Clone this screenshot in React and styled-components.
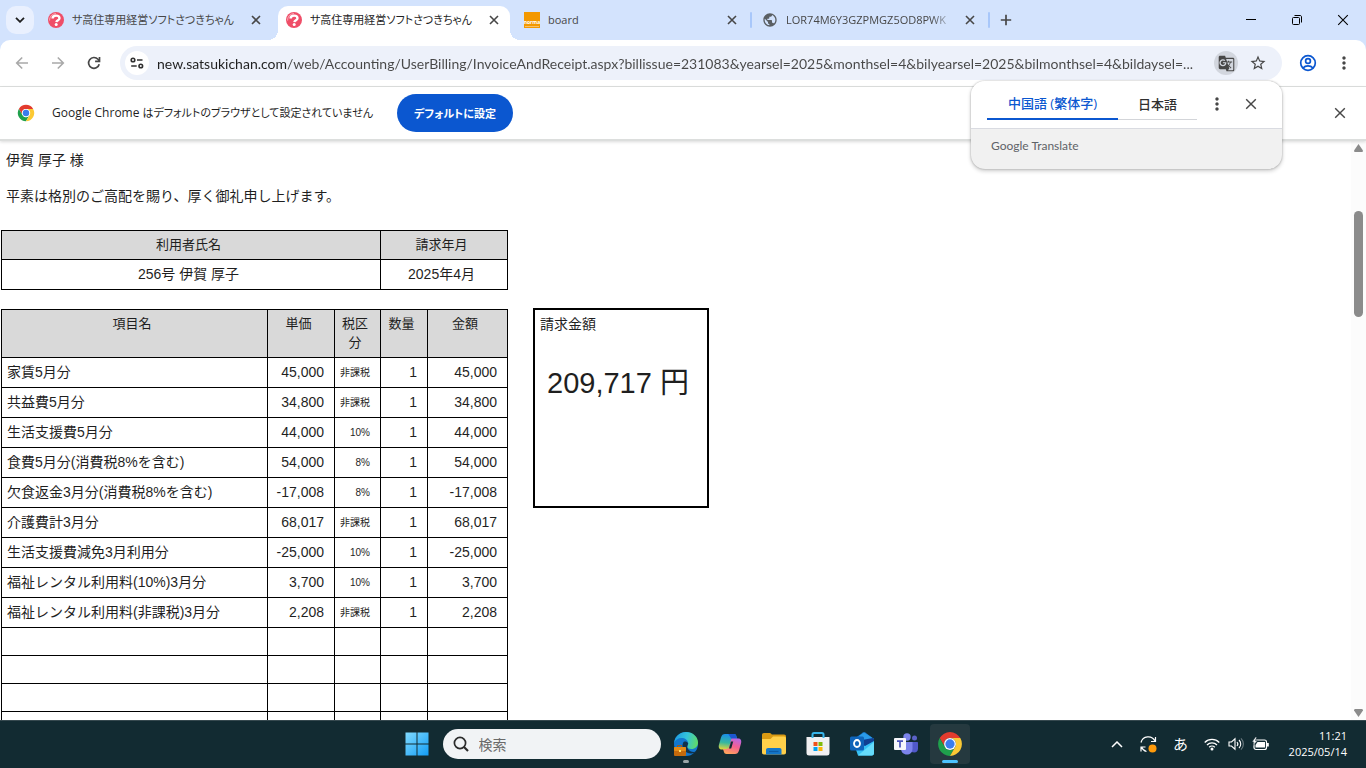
import React from 'react'
import styled, { createGlobalStyle } from 'styled-components'
import { MdGTranslate, MdMoreVert, MdPublic, MdStarBorder } from 'react-icons/md'

const UI_FONT = '"Open Sans", "Noto Sans CJK JP", sans-serif'
const DOC_FONT = '"Liberation Sans", "Noto Sans CJK JP", sans-serif'

const GlobalStyle = createGlobalStyle`
  * {
    box-sizing: border-box;
  }
  body {
    margin: 0;
    overflow: hidden;
    font-family: ${UI_FONT};
    color: #1f1f1f;
  }
  button, input {
    font-family: inherit;
    margin: 0;
    padding: 0;
    border: 0;
    background: none;
    color: inherit;
  }
  svg {
    display: block;
    flex-shrink: 0;
  }
`

const Screen = styled.div`
  display: flex;
  flex-direction: column;
  height: 100vh;
`

/* tab strip */

const TabStrip = styled.header`
  display: flex;
  align-items: center;
  height: 40px;
  flex-shrink: 0;
  background: #d3e3fd;
`

const TabSearch = styled.button`
  display: flex;
  align-items: center;
  justify-content: center;
  width: 28px;
  height: 28px;
  margin: 0 6px;
  border-radius: 10px;
  background: #e9f0fe;
`

const TabBox = styled.div`
  position: relative;
  display: flex;
  align-items: center;
  gap: 8px;
  flex: 0 1 238px;
  min-width: 0;
  height: 40px;
  padding: 0 16px 0 8px;
  color: ${props => props.$active ? '#1f1f1f' : '#474747'};
  z-index: ${props => props.$active ? 1 : 0};

  &::before {
    content: '';
    display: ${props => props.$active ? 'block' : 'none'};
    position: absolute;
    z-index: -1;
    top: 6px;
    right: -4px;
    bottom: 0;
    left: -10px;
    background:
      radial-gradient(circle at 0 0, transparent 10px, #fff 10px) left bottom / 10px 10px no-repeat,
      radial-gradient(circle at 100% 0, transparent 10px, #fff 10px) right bottom / 10px 10px no-repeat;
  }

  &::after {
    content: '';
    display: ${props => props.$divider ? 'block' : 'none'};
    position: absolute;
    top: 12px;
    right: 2px;
    width: 2px;
    height: 16px;
    border-radius: 1px;
    background: #a8c7fa;
  }
`

const TabFill = styled.span`
  position: absolute;
  z-index: -1;
  top: 6px;
  right: 6px;
  bottom: 0;
  left: 0;
  border-radius: 10px 10px 0 0;
  background: #fff;
`

const TabTitle = styled.button`
  flex: 1;
  min-width: 0;
  overflow: hidden;
  white-space: nowrap;
  text-align: left;
  font-size: 11px;
  line-height: 20px;
  font-feature-settings: "palt";
  ${props => props.$fade && 'mask-image: linear-gradient(to right, #000 85%, transparent);'}
`

const PlainButton = styled.button`
  display: flex;
  align-items: center;
  justify-content: center;
  width: ${props => props.$width || 36}px;
  height: ${props => props.$height || 36}px;
  flex-shrink: 0;
  color: ${props => props.$color || '#474747'};
`

const WindowControls = styled.div`
  display: flex;
  margin-left: auto;
`

/* toolbar */

const ToolbarBack = styled.div`
  flex-shrink: 0;
  background: #d3e3fd;
`

const Toolbar = styled.div`
  display: flex;
  align-items: center;
  height: 47px;
  padding: 0 4px;
  border-bottom: 1px solid #dfe1e0;
  border-radius: 10px 10px 0 0;
  background: #fff;
`

const Omnibox = styled.form`
  display: flex;
  align-items: center;
  flex: 1;
  min-width: 0;
  height: 34px;
  margin: 0 8px;
  padding: 0 12px 0 5px;
  gap: 8px;
  border-radius: 17px;
  background: #edf1fa;
`

const RoundButton = styled.button`
  display: flex;
  align-items: center;
  justify-content: center;
  width: 24px;
  height: 24px;
  flex-shrink: 0;
  border-radius: 50%;
  background: ${props => props.$fill || 'transparent'};
  color: #474747;
`

const UrlInput = styled.input`
  flex: 1;
  min-width: 0;
  height: 24px;
  font-family: Lato, sans-serif;
  font-size: 14px;
  outline: 0;
  color: transparent;
  background: linear-gradient(to right, #1f1f1f 130px, #474747 130px);
  background-clip: text;
  -webkit-background-clip: text;
`

/* default browser prompt */

const InfoBar = styled.div`
  display: flex;
  align-items: center;
  height: 54px;
  flex-shrink: 0;
  padding: 0 8px 0 17px;
  border-bottom: 2px solid #dcdedd;
  box-shadow: 0 1px 3px rgba(0, 0, 0, 0.15);
  position: relative;
  background: #fff;
`

const InfoText = styled.span`
  margin: 0 24px 0 17px;
  font-size: 12px;
  line-height: 20px;
`

const Kanji = styled.span`
  font-size: 11px;
  font-feature-settings: "palt";
`

const DefaultButton = styled.button`
  height: 38px;
  padding: 0 17px;
  border-radius: 19px;
  background: #0b57d0;
  color: #fff;
  font-size: 11px;
  font-weight: 700;
  font-feature-settings: "palt";
`

const Spacer = styled.div`
  flex: 1;
`

/* translate bubble */

const Bubble = styled.section`
  position: absolute;
  z-index: 5;
  top: 81px;
  right: 84px;
  width: 311px;
  border-radius: 14px;
  overflow: hidden;
  background: #f1f1f1;
  box-shadow: 0 0 2px rgba(0, 0, 0, 0.3), 0 2px 4px rgba(0, 0, 0, 0.2);
`

const BubbleHead = styled.div`
  display: flex;
  align-items: center;
  height: 48px;
  padding: 0 14px 2px 16px;
  border-bottom: 1px solid #d9dbe1;
  background: #fff;
`

const LanguageTab = styled.button`
  height: 32px;
  width: ${props => props.$selected ? 131 : 79}px;
  font-size: 13px;
  font-weight: 500;
  color: ${props => props.$selected ? '#0b57d0' : '#303030'};
  border-bottom: ${props => props.$selected ? '2px solid #0b57d0' : '1px solid #d3d5d9'};
`

const BubbleFoot = styled.div`
  height: 40px;
  padding: 7px 20px;
  font-family: Lato, sans-serif;
  font-size: 12px;
  line-height: 20px;
  color: #5f6368;
`

/* page */

const Viewport = styled.div`
  display: flex;
  flex: 1;
  min-height: 0;
`

const Page = styled.main`
  flex: 1;
  min-width: 0;
  overflow: hidden;
  padding: 9px 1px 0;
  font-family: ${DOC_FONT};
  font-size: 14px;
`

const Line = styled.p`
  margin: 0 5px 16px;
  line-height: 20px;
`

const Invoice = styled.div`
  display: flex;
  align-items: flex-start;
  gap: 25px;
`

const Table = styled.table`
  width: 507px;
  table-layout: fixed;
  border-collapse: collapse;
  margin: ${props => props.$top}px 0 0;
`

const Col = styled.col`
  width: ${props => props.$width}px;
`

const HeadCell = styled.th`
  height: ${props => props.$tall ? 48 : 29}px;
  padding: 4px 10px 4px 5px;
  border: 1px solid #000;
  background: #d9d9d9;
  font-size: 13px;
  font-weight: 400;
  line-height: 19px;
  vertical-align: top;
`

const Cell = styled.td`
  height: ${props => props.$blank ? 28 : 30}px;
  padding: 0 10px ${props => props.$small ? 0 : 2}px 5px;
  border: 1px solid #000;
  font-size: ${props => props.$small ? 10 : 14}px;
  line-height: 20px;
  text-align: ${props => props.$align || 'left'};
  white-space: nowrap;
`

const TotalBox = styled.section`
  width: 176px;
  height: 200px;
  margin-top: 18px;
  padding: 4px 5px;
  border: 2px solid #000;
  line-height: 20px;
`

const Total = styled.div`
  margin-top: 29px;
  padding-left: 7px;
  font-size: 29px;
  line-height: 40px;
  white-space: nowrap;
`

const ScrollTrack = styled.div`
  display: flex;
  flex-direction: column;
  align-items: center;
  width: 15px;
  padding: 3px 0;
  background: #fcfcfc;
  color: #8b8b8b;
`

const ScrollThumb = styled.div`
  width: 9px;
  height: 106px;
  margin: 59px 0 auto;
  border-radius: 5px;
  background: #8b8b8b;
`

/* taskbar */

const Taskbar = styled.footer`
  display: grid;
  grid-template-columns: 1fr auto 1fr;
  align-items: center;
  height: 48px;
  flex-shrink: 0;
  box-shadow: inset 0 1px #36494f;
  background: #122b32;
  color: #fff;
`

const TaskGroup = styled.div`
  display: flex;
  align-items: center;
  grid-column: 2;
`

const SearchBox = styled.label`
  display: flex;
  align-items: center;
  gap: 10px;
  width: 218px;
  height: 30px;
  margin: 0 3px 0 4px;
  padding: 0 10px;
  border-radius: 15px;
  background: #f1f3f5;
`

const SearchInput = styled.input`
  width: 150px;
  font-size: 14px;
  outline: 0;
  &::placeholder {
    color: #6a6a6a;
    opacity: 1;
  }
`

const AppButton = styled.button`
  position: relative;
  display: flex;
  align-items: center;
  justify-content: center;
  width: 40px;
  height: 40px;
  margin: 0 2px;
  border-radius: 4px;
  background: ${props => props.$active ? '#25393f' : 'transparent'};

  &::after {
    content: '';
    display: ${props => props.$mark ? 'block' : 'none'};
    position: absolute;
    bottom: 1px;
    width: ${props => props.$active ? 16 : 6}px;
    height: 3px;
    border-radius: 2px;
    background: ${props => props.$mark};
  }
`

const Tray = styled.div`
  display: flex;
  align-items: center;
  justify-content: flex-end;
  padding-right: 19px;
`

const Kana = styled.span`
  font-size: 15px;
  line-height: 20px;
`

const Status = styled.button`
  display: flex;
  align-items: center;
  gap: 8px;
  margin: 0 20px 0 7px;
`

const Clock = styled.button`
  font-size: 11px;
  line-height: 16px;
  text-align: right;
`

function Cross({ size = 10, weight = 1.6 }) {
  return (
    <svg width={size} height={size} viewBox="0 0 10 10" stroke="currentColor" strokeWidth={weight} fill="none">
      <path d="M1 1l8 8M9 1l-8 8" />
    </svg>
  )
}

function SatsukiIcon() {
  return (
    <svg width="16" height="16" viewBox="0 0 16 16">
      <circle cx="8" cy="8" r="8" fill="#ef4e68" />
      <path d="M1.6 8.6A6.4 6.4 0 0 1 8 1.6" stroke="#f9b3be" strokeWidth="0.9" fill="none" />
      <path d="M4.6 6.4C4.6 4.4 6.2 3.6 8 3.6s3.5.9 3.5 2.6c0 2.1-2.9 1.9-3.1 4" stroke="#fff" strokeWidth="2.4" fill="none" />
      <circle cx="8.2" cy="12.6" r="1.5" fill="#fff" />
    </svg>
  )
}

function BoardIcon() {
  return (
    <svg width="16" height="16" viewBox="0 0 16 16">
      <rect width="16" height="16" fill="#f39800" />
      <text x="8" y="11.5" fontSize="5" fontWeight="700" textAnchor="middle" fill="#fff">norma</text>
      <path d="M1 14.5h14" stroke="#f9cb80" strokeWidth="0.8" />
    </svg>
  )
}

function ChromeIcon({ size }) {
  return (
    <svg width={size} height={size} viewBox="0 0 48 48">
      <path d="M43.05 13A22 22 0 0 0 4.95 13L14.47 29.5A11 11 0 0 1 24 13z" fill="#e33b2e" />
      <path d="M4.95 13A22 22 0 0 0 24 46L33.53 29.5A11 11 0 0 1 14.47 29.5z" fill="#1fa04c" />
      <path d="M43.05 13A22 22 0 0 1 24 46L33.53 29.5A11 11 0 0 0 24 13z" fill="#fcc934" />
      <circle cx="24" cy="24" r="11" fill="#fff" />
      <circle cx="24" cy="24" r="8.6" fill="#3b7ded" />
    </svg>
  )
}

function ArrowIcon({ forward }) {
  return (
    <svg width="14" height="14" viewBox="0 0 14 14" stroke="#a9a9a9" strokeWidth="1.6" fill="none">
      <path d={forward ? 'M1 7h11M6.8 1.5L12.3 7l-5.5 5.5' : 'M13 7H2M7.2 1.5L1.7 7l5.5 5.5'} />
    </svg>
  )
}

function ReloadIcon() {
  return (
    <svg width="14" height="14" viewBox="0 0 14 14" stroke="#474747" strokeWidth="1.7" fill="none">
      <path d="M12.2 8.2A5.4 5.4 0 1 1 11 3.3L12.4 4.8" />
      <path d="M12.5 1v4.4H8.1" />
    </svg>
  )
}

function TuneIcon() {
  return (
    <svg width="14" height="12" viewBox="0 0 14 12" stroke="#303030" strokeWidth="1.6" fill="none">
      <circle cx="3" cy="3" r="1.8" />
      <path d="M7 3h5.5M1.2 9h5.5" />
      <circle cx="10.8" cy="9" r="1.8" />
    </svg>
  )
}

function ProfileIcon() {
  return (
    <svg width="18" height="18" viewBox="0 0 18 18" stroke="#0b57d0" strokeWidth="1.7" fill="none">
      <circle cx="9" cy="9" r="7.3" />
      <circle cx="9" cy="7" r="2.4" />
      <path d="M4 14c1.4-1.6 3-2.2 5-2.2s3.6.6 5 2.2" />
    </svg>
  )
}

function StartIcon() {
  return (
    <svg width="24" height="24" viewBox="0 0 24 24">
      <defs>
        <linearGradient id="start" x1="0" y1="0" x2="24" y2="24" gradientUnits="userSpaceOnUse">
          <stop offset="0" stopColor="#84dcff" />
          <stop offset="1" stopColor="#109bf5" />
        </linearGradient>
      </defs>
      <path d="M.5.5h11v11h-11zM12.5.5h11v11h-11zM.5 12.5h11v11h-11zM12.5 12.5h11v11h-11z" fill="url(#start)" />
    </svg>
  )
}

function EdgeIcon() {
  return (
    <svg width="26" height="26" viewBox="0 0 26 26">
      <defs>
        <linearGradient id="edgeTop" x1="1" y1="6" x2="25" y2="12" gradientUnits="userSpaceOnUse">
          <stop offset="0" stopColor="#1d9be0" />
          <stop offset="0.5" stopColor="#33c3dc" />
          <stop offset="1" stopColor="#63dd62" />
        </linearGradient>
      </defs>
      <circle cx="13" cy="13" r="12" fill="#1277cf" />
      <path d="M1 12C2 5 7 1 13 1c7 0 12 5 12 10.5 0 4-3 6.5-6.5 6.5-3 0-4.5-1.2-4.5-2.2 0-.8 1.2-1.2 1.2-3.3C15.2 9 12 7 8.5 7 5 7 2 9 1 12z" fill="url(#edgeTop)" />
      <path d="M10 12c-2 5 2 10.5 8 10.5 2.5 0 4.5-.8 5.7-2.2-3 1.2-7 .6-8.7-2.3-1-1.5-1-3 .2-5.5-1.5-2.5-4.2-2.5-5.2-.5z" fill="#11324b" />
      <path d="M4.5 16v-1.5h4V16" stroke="#a65a10" fill="none" />
      <rect x="1" y="16" width="12" height="9" rx="1" fill="#c46a0c" />
      <rect x="1" y="16" width="12" height="4" rx="1" fill="#e58b17" />
      <rect x="6" y="19" width="2" height="2" fill="#ffe06b" />
    </svg>
  )
}

function CopilotIcon() {
  return (
    <svg width="24" height="24" viewBox="0 0 24 24">
      <defs>
        <linearGradient id="copilotA" x1="6" y1="1" x2="4" y2="18" gradientUnits="userSpaceOnUse">
          <stop offset="0" stopColor="#1689f0" />
          <stop offset="0.55" stopColor="#35b7a0" />
          <stop offset="1" stopColor="#f5d92f" />
        </linearGradient>
        <linearGradient id="copilotB" x1="20" y1="6" x2="14" y2="23" gradientUnits="userSpaceOnUse">
          <stop offset="0" stopColor="#b267ed" />
          <stop offset="0.5" stopColor="#f45f92" />
          <stop offset="1" stopColor="#ffa35c" />
        </linearGradient>
      </defs>
      <path d="M14 2h2c1.5 0 2 .8 2.4 2.2L19.3 7H16c-2 0-2.7 1-3.2 3l-2 7.5H4c-3.5 0-3.6-2.8-3-5l2-7C3.7 3 5 2 7 2z" fill="url(#copilotA)" />
      <path d="M13 2h3c1.5 0 2 .8 2.4 2.2L19.3 7h-5.8L10.3 2z" fill="#1b56cf" />
      <path d="M10 22H8.5c-1.5 0-2.2-.8-2.6-2.2L5 17h3.2c2 0 2.7-1 3.2-3l2-7.5H20c3.5 0 3.6 2.8 3 5l-2 7c-.7 2.5-2 3.5-4 3.5z" fill="url(#copilotB)" />
      <path d="M13 9.5h2.2l-2 7H11z" fill="#122b32" />
    </svg>
  )
}

function FolderIcon() {
  return (
    <svg width="24" height="22" viewBox="0 0 24 22">
      <path d="M0 2C0 .7.7 0 2 0h5.5c1 0 1.5.5 2.3 1.5H22c1.3 0 2 .7 2 2V12H0z" fill="#d99a13" />
      <path d="M0 6h8.5L11 3.500h11c1.3 0 2 .7 2 2v14c0 1.3-.7 2-2 2H2c-1.3 0-2-.7-2-2z" fill="#ffd04a" />
      <path d="M4 21.5V17c0-1.3.8-2 2-2h11.5c1.3 0 2 .7 2 2v4.5z" fill="#1477c9" />
      <path d="M7 18.5h9.5" stroke="#0c5ba5" strokeWidth="1.2" />
    </svg>
  )
}

function StoreIcon() {
  return (
    <svg width="24" height="24" viewBox="0 0 24 24">
      <path d="M.5 5h23v16c0 1.7-1 2.5-2.5 2.5H3C1.5 23.5.5 22.7.5 21z" fill="#f0f0f2" />
      <path d="M6.5 6V2.500c0-1 .5-1.500 1.500-1.500h8c1 0 1.500.5 1.500 1.500V6" stroke="#37b5ea" strokeWidth="2" fill="none" />
      <path d="M7.5 10h4v4h-4z" fill="#f1511b" />
      <path d="M12.5 10h4v4h-4z" fill="#80bb0a" />
      <path d="M7.5 15h4v4h-4z" fill="#00a1f0" />
      <path d="M12.5 15h4v4h-4z" fill="#fbb409" />
    </svg>
  )
}

function OutlookIcon() {
  return (
    <svg width="24" height="24" viewBox="0 0 24 24">
      <path d="M4 7l9-6.5c.8-.5 1.5-.5 2.3 0L24 7v8H4z" fill="#1579cf" />
      <path d="M9 4l5-3.500L24 7l-8 6z" fill="#2a9ae8" />
      <path d="M12 8l11-2 1 1v5l-9 3z" fill="#103f91" />
      <path d="M4 12l11 2 9-5v12c0 1.5-.7 2.5-2.2 2.5H8z" fill="#35c1f5" />
      <path d="M8 23.500L24 10v11c0 1.5-.8 2.5-2.2 2.5z" fill="#65dcfb" />
      <rect x="0" y="4.5" width="14" height="14" rx="1.5" fill="#0f64b9" />
      <ellipse cx="7" cy="11.5" rx="3" ry="3.5" stroke="#fff" strokeWidth="1.8" fill="none" />
    </svg>
  )
}

function TeamsIcon() {
  return (
    <svg width="24" height="22" viewBox="0 0 24 22">
      <circle cx="20.5" cy="5" r="2.5" fill="#5b62c8" />
      <circle cx="13" cy="4" r="3.7" fill="#7b83eb" />
      <path d="M16 9h7c.7 0 1 .4 1 1v5.5c0 2.5-1.5 4-3.8 4-2 0-3.2-.8-4.2-2.5z" fill="#5059c9" />
      <path d="M7 9h11.500v6.500c0 4-2.4 6-5.7 6S7 19.200 7 15.500z" fill="#7b83eb" />
      <rect x="0" y="5" width="12" height="12" rx="1" fill="#f6f6fb" />
      <path d="M3 8.200h6M6 8.200v6.300" stroke="#4b53bc" strokeWidth="1.7" />
    </svg>
  )
}

function SyncIcon() {
  return (
    <svg width="17" height="17" viewBox="0 0 17 17" stroke="#fff" strokeWidth="1.2" fill="none">
      <path d="M1 6.500A7.500 7.500 0 0 1 15 5M15.500 1v4.500H11M6.500 15.500A7.500 7.500 0 0 1 1.500 11M1 15.500V11h4.500" />
      <circle cx="12.5" cy="12.5" r="4" fill="#ff9b0b" stroke="none" />
    </svg>
  )
}

function WifiIcon() {
  return (
    <svg width="16" height="14" viewBox="0 0 16 14" stroke="#fff" strokeWidth="1.3" fill="none">
      <path d="M.7 5.500a10.300 10.300 0 0 1 14.600 0M3 8a7 7 0 0 1 10 0M5.200 10.200a4 4 0 0 1 5.600 0" />
      <circle cx="8" cy="12" r="1.5" fill="#fff" stroke="none" />
    </svg>
  )
}

function SoundIcon() {
  return (
    <svg width="16" height="14" viewBox="0 0 16 14" stroke="#fff" strokeWidth="1.1" fill="none">
      <path d="M1 5h2.500L7 1.800v10.400L3.500 9H1z" />
      <path d="M9 5a3 3 0 0 1 0 4M11 3a5.500 5.500 0 0 1 0 8" />
      <path d="M13 1.300a8 8 0 0 1 0 11.400" stroke="#6c7b80" />
    </svg>
  )
}

function BatteryIcon() {
  return (
    <svg width="17" height="14" viewBox="0 0 17 14">
      <rect x="2" y="3" width="12.5" height="9.5" rx="2" stroke="#fff" strokeWidth="1.2" fill="none" />
      <path d="M5.500 5h7.500v5.500H3.500V8z" fill="#fff" />
      <path d="M15 6h1.800v3.500H15z" fill="#fff" />
      <path d="M3.500 0L0 5h2L1 8.500 5.500 3.800H3.300L4.800 0z" fill="#fff" stroke="#122b32" strokeWidth="0.5" />
    </svg>
  )
}

const TABS = [
  { title: 'サ高住専用経営ソフトさつきちゃん', icon: <SatsukiIcon /> },
  { title: 'サ高住専用経営ソフトさつきちゃん', icon: <SatsukiIcon />, active: true },
  { title: 'board', icon: <BoardIcon />, divider: true },
  { title: 'LOR74M6Y3GZPMGZ5OD8PWK', icon: <MdPublic size={16} color="#5a5f63" />, divider: true, fade: true }
]

const ITEMS = [
  ['家賃5月分', '45,000', '非課税'],
  ['共益費5月分', '34,800', '非課税'],
  ['生活支援費5月分', '44,000', '10%'],
  ['食費5月分(消費税8%を含む)', '54,000', '8%'],
  ['欠食返金3月分(消費税8%を含む)', '-17,008', '8%'],
  ['介護費計3月分', '68,017', '非課税'],
  ['生活支援費減免3月利用分', '-25,000', '10%'],
  ['福祉レンタル利用料(10%)3月分', '3,700', '10%'],
  ['福祉レンタル利用料(非課税)3月分', '2,208', '非課税']
]

const COLUMNS = [266, 67, 46, 47, 80]

const APPS = [
  { name: 'Edge', icon: <EdgeIcon />, mark: '#9aa5a8' },
  { name: 'Copilot', icon: <CopilotIcon /> },
  { name: 'Explorer', icon: <FolderIcon /> },
  { name: 'Store', icon: <StoreIcon /> },
  { name: 'Outlook', icon: <OutlookIcon /> },
  { name: 'Teams', icon: <TeamsIcon /> },
  { name: 'Chrome', icon: <ChromeIcon size={26} />, mark: '#4cc2ff', active: true }
]

function Tab(props) {
  return (
    <TabBox $active={props.active} $divider={props.divider}>
      {props.active && <TabFill />}
      {props.icon}
      <TabTitle $fade={props.fade}>{props.title}</TabTitle>
      <PlainButton $width={12} $height={16} aria-label="閉じる"><Cross /></PlainButton>
    </TabBox>
  )
}

function ItemTable() {
  const rows = ITEMS.map(([name, price, tax]) => (
    <tr key={name}>
      <Cell>{name}</Cell>
      <Cell $align="right">{price}</Cell>
      <Cell $align="right" $small>{tax}</Cell>
      <Cell $align="right">1</Cell>
      <Cell $align="right">{price}</Cell>
    </tr>
  ))

  const blanks = Array(5).fill().map((_, i) => (
    <tr key={['blank', i].join('_')}>
      {COLUMNS.map(width => <Cell key={width} $blank />)}
    </tr>
  ))

  return (
    <Table $top={19}>
      <colgroup>
        {COLUMNS.map(width => <Col key={width} $width={width} />)}
      </colgroup>
      <thead>
        <tr>
          <HeadCell $tall>項目名</HeadCell>
          <HeadCell $tall>単価</HeadCell>
          <HeadCell $tall>税区分</HeadCell>
          <HeadCell $tall>数量</HeadCell>
          <HeadCell $tall>金額</HeadCell>
        </tr>
      </thead>
      <tbody>
        {rows}
        {blanks}
      </tbody>
    </Table>
  )
}

export default function App() {
  return (
    <Screen>
      <GlobalStyle />
      <TabStrip>
        <TabSearch aria-label="タブを検索">
          <svg width="10" height="6" viewBox="0 0 10 6" stroke="#1f1f1f" strokeWidth="1.8" fill="none">
            <path d="M1 .8l4 4 4-4" />
          </svg>
        </TabSearch>
        {TABS.map((tab, i) => <Tab key={i} {...tab} />)}
        <PlainButton $width={28} aria-label="新しいタブ">
          <svg width="12" height="12" viewBox="0 0 12 12" stroke="currentColor" strokeWidth="1.7">
            <path d="M6 .8v10.400M.8 6h10.400" />
          </svg>
        </PlainButton>
        <WindowControls>
          <PlainButton $width={46} $color="#000" aria-label="最小化">
            <svg width="10" height="10" viewBox="0 0 10 10" stroke="currentColor"><path d="M0 4.500h10" /></svg>
          </PlainButton>
          <PlainButton $width={46} $color="#000" aria-label="元に戻す">
            <svg width="10" height="10" viewBox="0 0 10 10" stroke="currentColor" fill="none">
              <rect x=".5" y="2.5" width="7" height="7" rx="1" />
              <path d="M2.500.5H8c1 0 1.500.5 1.500 1.500v5.500" />
            </svg>
          </PlainButton>
          <PlainButton $width={46} $color="#000" aria-label="ウィンドウを閉じる"><Cross size={12} weight={0.9} /></PlainButton>
        </WindowControls>
      </TabStrip>

      <ToolbarBack>
        <Toolbar>
          <PlainButton aria-label="戻る"><ArrowIcon /></PlainButton>
          <PlainButton aria-label="進む"><ArrowIcon forward /></PlainButton>
          <PlainButton aria-label="再読み込み"><ReloadIcon /></PlainButton>
          <Omnibox>
            <RoundButton type="button" $fill="#fff" aria-label="サイト情報"><TuneIcon /></RoundButton>
            <UrlInput
              aria-label="アドレス"
              defaultValue="new.satsukichan.com/web/Accounting/UserBilling/InvoiceAndReceipt.aspx?billissue=231083&yearsel=2025&monthsel=4&bilyearsel=2025&bilmonthsel=4&bildaysel=..."
            />
            <RoundButton type="button" $fill="#d2d6de" aria-label="翻訳"><MdGTranslate size={17} /></RoundButton>
            <RoundButton type="button" aria-label="ブックマーク"><MdStarBorder size={18} /></RoundButton>
          </Omnibox>
          <PlainButton aria-label="プロフィール"><ProfileIcon /></PlainButton>
          <PlainButton aria-label="メニュー"><MdMoreVert size={20} /></PlainButton>
        </Toolbar>
      </ToolbarBack>

      <InfoBar>
        <ChromeIcon size={18} />
        <InfoText>Google Chrome <Kanji>はデフォルトのブラウザとして設定されていません</Kanji></InfoText>
        <DefaultButton>デフォルトに設定</DefaultButton>
        <Spacer />
        <PlainButton aria-label="閉じる"><Cross size={12} weight={1.2} /></PlainButton>
      </InfoBar>

      <Bubble>
        <BubbleHead>
          <LanguageTab $selected>中国語 (繁体字)</LanguageTab>
          <LanguageTab>日本語</LanguageTab>
          <Spacer />
          <PlainButton $width={34} aria-label="翻訳オプション"><MdMoreVert size={20} /></PlainButton>
          <PlainButton $width={34} aria-label="閉じる"><Cross size={12} weight={1.2} /></PlainButton>
        </BubbleHead>
        <BubbleFoot>Google Translate</BubbleFoot>
      </Bubble>

      <Viewport>
        <Page>
          <Line>伊賀 厚子 様</Line>
          <Line>平素は格別のご高配を賜り、厚く御礼申し上げます。</Line>
          <Table $top={24}>
            <colgroup>
              <Col $width={379} />
              <Col $width={127} />
            </colgroup>
            <thead>
              <tr>
                <HeadCell>利用者氏名</HeadCell>
                <HeadCell>請求年月</HeadCell>
              </tr>
            </thead>
            <tbody>
              <tr>
                <Cell $align="center">256号 伊賀 厚子</Cell>
                <Cell $align="center">2025年4月</Cell>
              </tr>
            </tbody>
          </Table>
          <Invoice>
            <ItemTable />
            <TotalBox>
              請求金額
              <Total>209,717 円</Total>
            </TotalBox>
          </Invoice>
        </Page>
        <ScrollTrack>
          <svg width="9" height="8" viewBox="0 0 9 8" fill="currentColor"><path d="M4.500 0L9 6.500Q9 8 8 8H1Q0 8 0 6.500z" /></svg>
          <ScrollThumb />
          <svg width="9" height="8" viewBox="0 0 9 8" fill="currentColor"><path d="M4.500 8L9 1.500Q9 0 8 0H1Q0 0 0 1.500z" /></svg>
        </ScrollTrack>
      </Viewport>

      <Taskbar>
        <TaskGroup>
          <AppButton aria-label="スタート"><StartIcon /></AppButton>
          <SearchBox>
            <svg width="16" height="16" viewBox="0 0 16 16" stroke="#2b2b2b" strokeWidth="1.7" fill="none">
              <circle cx="7" cy="7" r="5.6" />
              <path d="M11 11l4 4" strokeWidth="2.2" />
            </svg>
            <SearchInput aria-label="検索" placeholder="検索" />
          </SearchBox>
          {APPS.map(app => (
            <AppButton key={app.name} aria-label={app.name} $mark={app.mark} $active={app.active}>{app.icon}</AppButton>
          ))}
        </TaskGroup>
        <Tray>
          <PlainButton $width={32} $color="#fff" aria-label="隠れているインジケーター">
            <svg width="12" height="7" viewBox="0 0 12 7" stroke="currentColor" strokeWidth="1.5" fill="none">
              <path d="M1 6l5-5 5 5" />
            </svg>
          </PlainButton>
          <PlainButton $width={32} aria-label="更新"><SyncIcon /></PlainButton>
          <PlainButton $width={32} $color="#fff"><Kana>あ</Kana></PlainButton>
          <Status aria-label="ネットワーク、音量、バッテリー">
            <WifiIcon />
            <SoundIcon />
            <BatteryIcon />
          </Status>
          <Clock>11:21<br />2025/05/14</Clock>
        </Tray>
      </Taskbar>
    </Screen>
  )
}
